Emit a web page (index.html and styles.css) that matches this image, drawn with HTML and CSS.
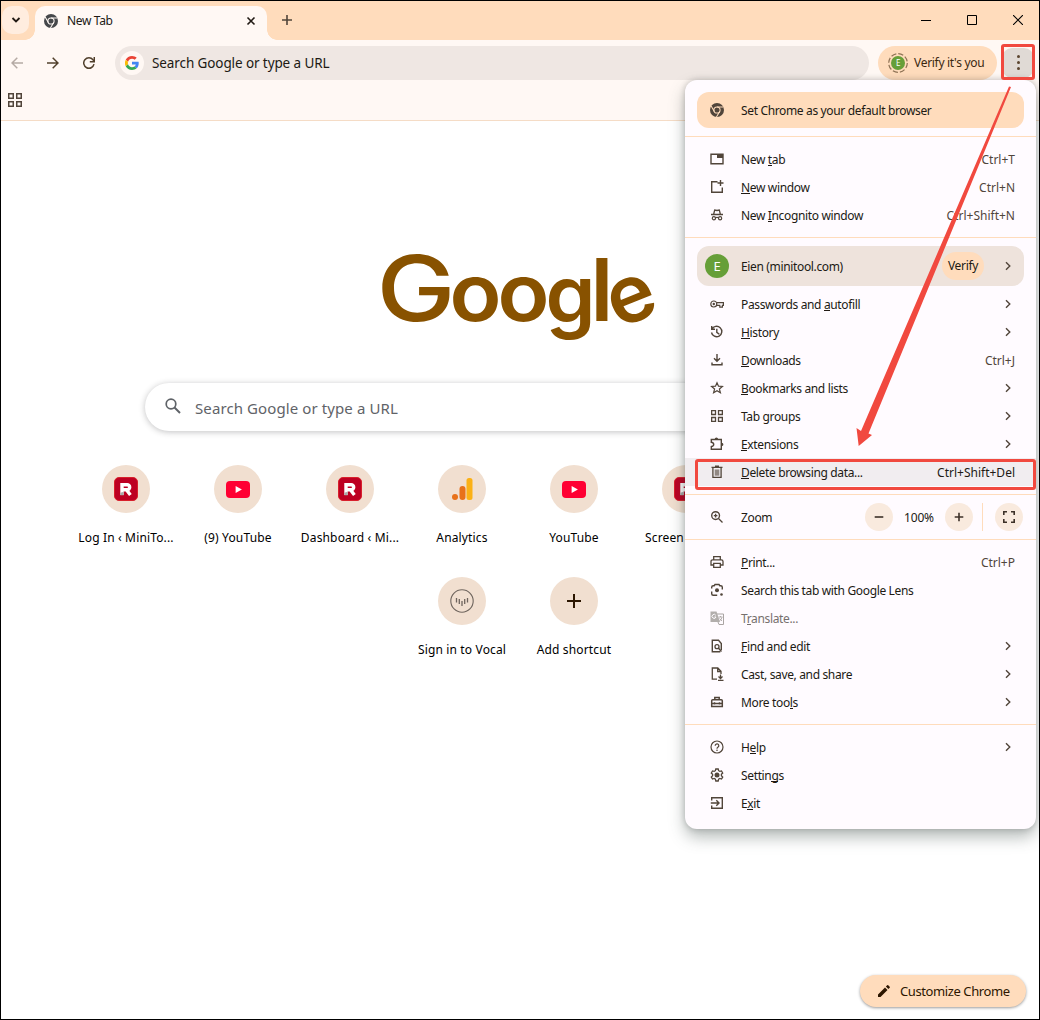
FILE: index.html
```html
<!DOCTYPE html>
<html lang="en">
<head>
  <meta charset="UTF-8">
  <title>New Tab</title>
  <meta name="viewport" content="width=device-width, initial-scale=1">
  <link rel="stylesheet" href="styles.css">
</head>
<body>
  <!-- Shared icons -->
  <svg class="sprite">
    <symbol id="chrome" viewBox="0 0 24 24">
      <circle cx="12" cy="12" r="12"/>
      <circle cx="12" cy="12" r="5.3" class="chrome-ring"/>
      <path d="M12 6.7H23M7.4 14.6L2 5.3M16.6 14.6L11 24" class="chrome-ring"/>
    </symbol>
    <symbol id="chevron" viewBox="0 0 10 10"><path d="M3 1.2L6.8 5L3 8.8" fill="none" stroke="currentColor" stroke-width="1.4"/></symbol>
    <symbol id="grid" viewBox="0 0 14 14"><path d="M.75.75h4.5v4.5H.75zM8.75.75h4.5v4.5h-4.5zM.75 8.75h4.5v4.5H.75zM8.75 8.75h4.5v4.5h-4.5z" fill="none" stroke="currentColor" stroke-width="1.5"/></symbol>
    <symbol id="youtube" viewBox="0 0 24 17"><rect width="24" height="17" rx="4" fill="#ff0033"/><path d="M9.6 4.9v7.2l6.3-3.6z" fill="#fff"/></symbol>
    <symbol id="minitool" viewBox="0 0 24 24">
      <rect x=".5" y=".5" width="23" height="23" rx="4.5" fill="#bd0022" stroke="#d8202c"/>
      <path d="M8 18V7.8h5.2a2.5 2.5 0 0 1 0 5H9.5M12.6 13l3.8 5" fill="none" stroke="#fff" stroke-width="3.4"/>
      <path d="M6.3 18.2v-2.5l3.4-1v3.5z" fill="#aaa"/>
    </symbol>
  </svg>

  <div class="window">
    <header class="tabstrip">
      <div class="tab-search"><svg width="10" height="8" viewBox="0 0 10 8"><path d="M1.5 2L5 5.5L8.5 2" fill="none" stroke="currentColor" stroke-width="1.8"/></svg></div>
      <div class="tab">
        <svg class="tab-icon" width="14" height="14"><use href="#chrome"/></svg>
        <span class="tab-title">New Tab</span>
        <svg width="10" height="10" viewBox="0 0 10 10"><path d="M1.5 1.5l7 7M8.5 1.5l-7 7" stroke="currentColor" stroke-width="1.6"/></svg>
      </div>
      <svg class="new-tab" width="12" height="12" viewBox="0 0 12 12"><path d="M6 1v10M1 6h10" stroke="currentColor" stroke-width="1.6"/></svg>
      <div class="window-controls">
        <svg width="10" height="10" viewBox="0 0 10 10"><path d="M0 5.5h10" stroke="#000"/></svg>
        <svg width="10" height="10" viewBox="0 0 10 10"><path d="M.5.5h9v9h-9z" fill="none" stroke="#000"/></svg>
        <svg width="10" height="10" viewBox="0 0 10 10"><path d="M0 0l10 10M10 0L0 10" stroke="#000" stroke-width="1.1"/></svg>
      </div>
    </header>

    <div class="toolbar">
      <svg class="nav-btn disabled" width="12" height="12" viewBox="0 0 12 12"><path d="M12 6H1.2M6.3.7L1 6l5.3 5.3" fill="none" stroke="currentColor" stroke-width="1.5"/></svg>
      <svg class="nav-btn" width="12" height="12" viewBox="0 0 12 12"><path d="M0 6h10.8M5.7.7L11 6l-5.3 5.3" fill="none" stroke="currentColor" stroke-width="1.5"/></svg>
      <svg class="nav-btn" width="12" height="12" viewBox="0 0 12 12"><path d="M11 7.2A5.2 5.2 0 1 1 10 2.8L11.2 4.4" fill="none" stroke="currentColor" stroke-width="1.5"/><path d="M11.3 0v4.8H6.8" fill="none" stroke="currentColor" stroke-width="1.5"/></svg>
      <div class="omnibox">
        <span class="g-badge">
          <svg width="14" height="14" viewBox="0 0 48 48">
            <path fill="#ea4335" d="M24 9.5c3.5 0 6.7 1.2 9.2 3.6l6.9-6.9C35.9 2.4 30.5 0 24 0 14.6 0 6.5 5.4 2.6 13.2l8 6.2C12.4 13.7 17.7 9.5 24 9.5z"/>
            <path fill="#4285f4" d="M47 24.5c0-1.6-.2-3.1-.4-4.5H24v9h12.9c-.6 3-2.3 5.5-4.8 7.200l7.700 6C44.400 38 47 32 47 24.500z"/>
            <path fill="#fbbc05" d="M10.500 28.600a14.500 14.500 0 0 1 0-9.200l-8-6.200a24 24 0 0 0 0 21.600z"/>
            <path fill="#34a853" d="M24 48c6.500 0 11.900-2.100 15.900-5.800l-7.700-6c-2.200 1.500-4.900 2.300-8.200 2.300-6.300 0-11.600-4.200-13.500-9.900l-8 6.200C6.500 42.600 14.600 48 24 48z"/>
          </svg>
        </span>
        <span class="omnibox-text">Search Google or type a URL</span>
      </div>
      <div class="verify">
        <span class="verify-avatar"><svg width="20" height="20" viewBox="0 0 20 20"><circle cx="10" cy="10" r="9.300" fill="none" stroke="#8f7355" stroke-width="1.200" stroke-dasharray="5.300 2"/></svg><b>E</b></span>
        <span>Verify it's you</span>
      </div>
      <div class="menu-btn"><i></i><i></i><i></i></div>
    </div>

    <div class="bookmarks"><svg width="14" height="14"><use href="#grid"/></svg></div>

    <main class="page">
      <svg class="logo" width="300" height="110" viewBox="370 240 300 110">
        <text y="321"><tspan x="376.500" class="logo-g" textLength="79" lengthAdjust="spacingAndGlyphs">G</tspan><tspan x="449.500" textLength="52" lengthAdjust="spacingAndGlyphs">o</tspan><tspan x="497.500" textLength="52" lengthAdjust="spacingAndGlyphs">o</tspan><tspan x="545.500" y="323">g</tspan><tspan x="590.500" y="321" class="logo-l">l</tspan><tspan x="618" y="329" rotate="-22">e</tspan></text>
      </svg>
      <div class="search">
        <svg width="16" height="16" viewBox="0 0 16 16"><circle cx="6" cy="6" r="4.800" fill="none" stroke="currentColor" stroke-width="1.700"/><path d="M9.500 9.500l5.500 5.500" stroke="currentColor" stroke-width="2"/></svg>
        <span>Search Google or type a URL</span>
      </div>
      <div class="shortcuts">
        <div class="tile"><span class="tile-icon"><svg width="24" height="24"><use href="#minitool"/></svg></span><span class="tile-label">Log In ‹ MiniTo...</span></div>
        <div class="tile"><span class="tile-icon"><svg width="24" height="17"><use href="#youtube"/></svg></span><span class="tile-label">(9) YouTube</span></div>
        <div class="tile"><span class="tile-icon"><svg width="24" height="24"><use href="#minitool"/></svg></span><span class="tile-label">Dashboard ‹ Mi...</span></div>
        <div class="tile"><span class="tile-icon"><svg width="22" height="24" viewBox="0 0 22 24"><circle cx="4" cy="20" r="3" fill="#e8711a"/><rect x="8.500" y="9" width="6" height="14" rx="3" fill="#e8711a"/><rect x="15.500" y="1" width="6" height="22" rx="2.500" fill="#fbb116"/></svg></span><span class="tile-label">Analytics</span></div>
        <div class="tile"><span class="tile-icon"><svg width="24" height="17"><use href="#youtube"/></svg></span><span class="tile-label">YouTube</span></div>
        <div class="tile"><span class="tile-icon"><svg width="24" height="24"><use href="#minitool"/></svg></span><span class="tile-label cut">Screen</span></div>
      </div>
      <div class="shortcuts second">
        <div class="tile"><span class="tile-icon"><svg width="24" height="24" viewBox="0 0 24 24"><circle cx="12" cy="12" r="11.200" fill="none" stroke="#6f655e" stroke-width="1.100"/><path d="M6.500 9v4.500M9.300 10v5M12 12v5M14.700 10v5M17.500 9v4.500" stroke="#6f655e" stroke-width="1.300"/></svg></span><span class="tile-label">Sign in to Vocal</span></div>
        <div class="tile"><span class="tile-icon"><svg width="14" height="14" viewBox="0 0 14 14"><path d="M7 0v14M0 7h14" stroke="#2c1600" stroke-width="2"/></svg></span><span class="tile-label">Add shortcut</span></div>
      </div>
    </main>

    <div class="customize">
      <svg width="12" height="12" viewBox="0 0 12 12"><path d="M0 9.500V12h2.500l7-7L7 2.500zM11.700 2.800a.8.8 0 0 0 0-1L10.200.3a.8.8 0 0 0-1 0L7.900 1.600l2.500 2.500z" fill="currentColor"/></svg>
      <span>Customize Chrome</span>
    </div>

    <!-- App menu -->
    <div class="menu">
      <div class="default-browser"><svg class="menu-icon" width="14" height="14"><use href="#chrome"/></svg><span class="label">Set Chrome as your default browser</span></div>
      <hr>
      <div class="item"><svg class="menu-icon" width="14" height="14" viewBox="0 0 14 14"><path d="M1 2.200h12v9.600H1z" fill="none" stroke="currentColor" stroke-width="1.400"/><path d="M7 2h6v4H7z"/></svg><span class="label">New <u>t</u>ab</span><span class="key">Ctrl+T</span></div>
      <div class="item"><svg class="menu-icon" width="14" height="14" viewBox="0 0 14 14"><path d="M7.500 1.700H1.700v10.600h10.600V7.500M10.500 0v6M7.500 3h6" fill="none" stroke="currentColor" stroke-width="1.400"/></svg><span class="label"><u>N</u>ew window</span><span class="key">Ctrl+N</span></div>
      <div class="item"><svg class="menu-icon" width="14" height="14" viewBox="0 0 14 14"><path d="M3.700 6l1-4 2.300.5 2.300-.5 1 4M1 6.500h12M5.200 9.800q1.800-1 3.600 0" fill="none" stroke="currentColor" stroke-width="1.300"/><circle cx="3.900" cy="10.300" r="1.600" fill="none" stroke="currentColor" stroke-width="1.200"/><circle cx="10.100" cy="10.300" r="1.600" fill="none" stroke="currentColor" stroke-width="1.200"/></svg><span class="label">New <u>I</u>ncognito window</span><span class="key">Ctrl+Shift+N</span></div>
      <hr>
      <div class="account">
        <span class="avatar">E</span>
        <span class="label">Eien (minitool.com)</span>
        <span class="verify-chip">Verify</span>
        <svg class="chevron" width="10" height="10"><use href="#chevron"/></svg>
      </div>
      <div class="item"><svg class="menu-icon" width="14" height="14" viewBox="0 0 14 14"><circle cx="3.800" cy="7" r="3" fill="none" stroke="currentColor" stroke-width="1.200"/><circle cx="3.800" cy="7" r="1.200"/><path d="M6.700 5.700h6.700v2.600h-1v1.800h-2.600V8.300H6.700" fill="none" stroke="currentColor" stroke-width="1.200"/></svg><span class="label">Passwords and <u>a</u>utofill</span><svg class="chevron" width="10" height="10"><use href="#chevron"/></svg></div>
      <div class="item"><svg class="menu-icon" width="14" height="14" viewBox="0 0 14 14"><path d="M1.700 1v3.300H5M1.900 4.300A5.200 5.200 0 1 1 1.500 7.500M6.800 3.800v3.500l2.500 2" fill="none" stroke="currentColor" stroke-width="1.400"/></svg><span class="label"><u>H</u>istory</span><svg class="chevron" width="10" height="10"><use href="#chevron"/></svg></div>
      <div class="item"><svg class="menu-icon" width="14" height="14" viewBox="0 0 14 14"><path d="M7 1v7M4 5.300l3 3 3-3M2 9.500v2.300h10V9.500" fill="none" stroke="currentColor" stroke-width="1.400"/></svg><span class="label"><u>D</u>ownloads</span><span class="key">Ctrl+J</span></div>
      <div class="item"><svg class="menu-icon" width="14" height="14" viewBox="0 0 14 14"><path d="M7 1.700l1.500 3.500 3.900.3-3 2.500 1 3.800L7 9.800l-3.400 2 1-3.800-3-2.500 3.900-.3z" fill="none" stroke="currentColor" stroke-width="1.200"/></svg><span class="label"><u>B</u>ookmarks and lists</span><svg class="chevron" width="10" height="10"><use href="#chevron"/></svg></div>
      <div class="item"><svg class="menu-icon small" width="12" height="12"><use href="#grid"/></svg><span class="label">Tab groups</span><svg class="chevron" width="10" height="10"><use href="#chevron"/></svg></div>
      <div class="item"><svg class="menu-icon" width="14" height="14" viewBox="0 0 14 14"><path d="M1.300 2.500h10v9.800h-10V9.500q2.400-.4 2.400-2.100T1.300 5.300z" fill="none" stroke="currentColor" stroke-width="1.400"/><path d="M4.700 2.200a1.700 1.700 0 0 1 3.400 0zM11.700 5.700a1.700 1.700 0 0 1 0 3.400z"/></svg><span class="label"><u>E</u>xtensions</span><svg class="chevron" width="10" height="10"><use href="#chevron"/></svg></div>
      <div class="item hover"><svg class="menu-icon" width="14" height="14" viewBox="0 0 14 14"><path d="M2.900 3v9.300h8.200V3M1.500 2.400h11M5 1.200h4" fill="none" stroke="currentColor" stroke-width="1.300"/><path d="M4.700 4.500h4.600v6.200H4.700z" opacity=".6"/></svg><span class="label"><u>D</u>elete browsing data...</span><span class="key">Ctrl+Shift+Del</span></div>
      <hr>
      <div class="zoom-row">
        <svg class="menu-icon" width="14" height="14" viewBox="0 0 14 14"><circle cx="5.600" cy="5.600" r="3.900" fill="none" stroke="currentColor" stroke-width="1.400"/><path d="M8.500 8.500l4 4M3.800 5.600h3.600M5.600 3.800v3.600" stroke="currentColor" stroke-width="1.300"/></svg>
        <span class="label">Zoom</span>
        <span class="round"><svg width="10" height="10" viewBox="0 0 10 10"><path d="M.7 5h8.600" stroke="currentColor" stroke-width="1.600"/></svg></span>
        <span class="percent">100%</span>
        <span class="round"><svg width="10" height="10" viewBox="0 0 10 10"><path d="M.7 5h8.600M5 .7v8.600" stroke="currentColor" stroke-width="1.600"/></svg></span>
        <span class="divider"></span>
        <span class="round"><svg width="12" height="12" viewBox="0 0 12 12"><path d="M.8 4V.8H4M8 .8h3.200V4M11.200 8v3.200H8M4 11.200H.8V8" fill="none" stroke="currentColor" stroke-width="1.600"/></svg></span>
      </div>
      <hr>
      <div class="item"><svg class="menu-icon" width="14" height="14" viewBox="0 0 14 14"><path d="M3.700 4.500V1.700h6.600v2.800M3.500 10H1V6.500q0-1.700 1.700-1.700h8.600Q13 4.800 13 6.500V10h-2.500M3.700 8.400h6.600v4H3.700z" fill="none" stroke="currentColor" stroke-width="1.300"/></svg><span class="label"><u>P</u>rint...</span><span class="key">Ctrl+P</span></div>
      <div class="item"><svg class="menu-icon" width="14" height="14" viewBox="0 0 14 14"><path d="M1.700 5.500V4.200q0-1.500 1.500-1.500h1L5 1.500h4l.8 1.200h1q1.500 0 1.500 1.500v2.300M1.700 8.500v2.300q0 1.500 1.500 1.500h4" fill="none" stroke="currentColor" stroke-width="1.400"/><circle cx="7" cy="7.300" r="2"/><circle cx="11.500" cy="11.500" r="1.300"/></svg><span class="label">Search this tab with Google Lens</span></div>
      <div class="item off"><svg class="menu-icon" width="14" height="14" viewBox="0 0 14 14"><path d="M.5.500h6L10 11H.5z" opacity=".9"/><path d="M7 3h6.500v10.500H9L8 11" fill="none" stroke="currentColor"/><path d="M8.500 6h4M10.500 5v1M12 6.300q-.5 2-2.300 3.500M9.500 7.500l2.500 2.500" fill="none" stroke="currentColor" stroke-width=".9"/><path d="M5.800 4.300A2 2 0 1 0 6 6H4.500" fill="none" stroke="#fffbff"/></svg><span class="label">T<u>r</u>anslate...</span></div>
      <div class="item"><svg class="menu-icon" width="14" height="14" viewBox="0 0 14 14"><path d="M11.300 11V4.500L8.500 1.300H2.300v11.400h8" fill="none" stroke="currentColor" stroke-width="1.400"/><circle cx="7" cy="7.700" r="2" fill="none" stroke="currentColor" stroke-width="1.300"/><path d="M8.300 9l3.200 3.400" stroke="currentColor" stroke-width="1.400"/></svg><span class="label"><u>F</u>ind and edit</span><svg class="chevron" width="10" height="10"><use href="#chevron"/></svg></div>
      <div class="item"><svg class="menu-icon" width="14" height="14" viewBox="0 0 14 14"><path d="M7 12.200H2.300V1h5.500l3.200 3.300V7M7.700 1v3.500H11M10.500 7.500v4M8.500 9.500l2 2 2-2M8 13.400h5.500" fill="none" stroke="currentColor" stroke-width="1.300"/></svg><span class="label">Cast, save, and share</span><svg class="chevron" width="10" height="10"><use href="#chevron"/></svg></div>
      <div class="item"><svg class="menu-icon" width="14" height="14" viewBox="0 0 14 14"><path d="M1.700 11.500V5.700q0-1 1-1h8.600q1 0 1 1v5.800zM4.800 4.500V2.600h4.400v1.900M1.500 8.400h11M4.500 7.200v2.400M9.500 7.200v2.400" fill="none" stroke="currentColor" stroke-width="1.500"/></svg><span class="label">More too<u>l</u>s</span><svg class="chevron" width="10" height="10"><use href="#chevron"/></svg></div>
      <hr>
      <div class="item"><svg class="menu-icon" width="14" height="14" viewBox="0 0 14 14"><circle cx="7" cy="7" r="6" fill="none" stroke="currentColor" stroke-width="1.200"/><path d="M5.200 5.700a1.800 1.800 0 1 1 2.900 1.400Q7 7.800 7 8.700" fill="none" stroke="currentColor" stroke-width="1.200"/><circle cx="7" cy="10.300" r=".8"/></svg><span class="label">H<u>e</u>lp</span><svg class="chevron" width="10" height="10"><use href="#chevron"/></svg></div>
      <div class="item"><svg class="menu-icon" width="14" height="14" viewBox="0 0 14 14"><path d="M5.800 1h2.400l.4 1.700 1.200.7 1.700-.5 1.200 2.100-1.300 1.200v1.500l1.300 1.300-1.200 2-1.700-.5-1.200.7L8.200 13H5.800l-.4-1.800-1.200-.7-1.700.5-1.200-2 1.300-1.300V6.200L1.300 5l1.200-2.100 1.700.5 1.200-.7z" fill="none" stroke="currentColor" stroke-width="1.300"/><circle cx="7" cy="7" r="2.500"/></svg><span class="label">Settin<u>g</u>s</span></div>
      <div class="item"><svg class="menu-icon" width="14" height="14" viewBox="0 0 14 14"><path d="M1.700 4.500V1.700h10.600v10.600H1.700V9.500M.8 7h8M6.300 4.300L9 7 6.300 9.700" fill="none" stroke="currentColor" stroke-width="1.400"/></svg><span class="label">E<u>x</u>it</span></div>
    </div>

    <!-- Callouts -->
    <svg class="callouts" width="1040" height="1020" viewBox="0 0 1040 1020">
      <rect x="1002.500" y="45.500" width="31" height="33" rx="1.500"/>
      <rect x="696.500" y="460.500" width="338" height="28" rx="1.500"/>
      <path d="M1009 86.500L1011 87L868.500 433.500L872 435L858.700 446L856.500 428L861 431z" class="arrow"/>
    </svg>
  </div>
</body>
</html>
```
FILE: styles.css
```css
:root { --peach: #ffdcbc; --toolbar: #fff8f4; --ink: #211a14; --icon: #51453a; --red: #f1493f; }
* { box-sizing: border-box; margin: 0; padding: 0; }
body { font-family: 'Noto Sans', sans-serif; font-size: 12px; color: var(--ink); background: #fff; overflow: hidden; }
svg { display: block; flex: none; }
.sprite { position: absolute; width: 0; height: 0; }
.chrome-ring { fill: none; stroke: var(--ring, #fff8f4); stroke-width: 1.8; }

.window { position: relative; width: 1040px; height: 1020px; border: 1px solid #000; overflow: hidden; display: flex; flex-direction: column; }

/* Tab strip */
.tabstrip { display: flex; height: 39px; padding: 5px 15px 0 1px; background: var(--peach); flex: none; }
.tab-search { display: flex; align-items: center; justify-content: center; width: 27px; height: 28px; border-radius: 10px; background: #ffeddf; }
.tab { position: relative; display: flex; align-items: center; width: 232px; height: 34px; margin-left: 6px; padding: 0 11px 5px 9px; background: var(--toolbar); border-radius: 10px 10px 0 0; }
.tab::before, .tab::after { content: ""; position: absolute; bottom: 0; width: 10px; height: 10px; }
.tab::before { left: -10px; background: radial-gradient(circle at 0 0, transparent 9.5px, var(--toolbar) 10px); }
.tab::after { right: -10px; background: radial-gradient(circle at 100% 0, transparent 9.5px, var(--toolbar) 10px); }
.tab-icon { color: #45474a; fill: #45474a; }
.tab-title { flex: 1; margin-left: 9px; letter-spacing: -.35px; }
.new-tab { margin: 8px 0 0 14px; color: #51453a; }
.window-controls { display: flex; gap: 36px; margin: 9px 1px 0 auto; }

/* Toolbar */
.toolbar { display: flex; align-items: center; height: 45px; padding: 0 4px 0 10px; background: var(--toolbar); flex: none; }
.nav-btn { margin-right: 24px; color: #51402c; }
.nav-btn.disabled { color: #b5aaa4; }
.omnibox { display: flex; align-items: center; width: 754px; height: 34px; margin-left: -4px; padding-left: 5px; border-radius: 17px; background: #efe7e3; }
.g-badge { display: flex; align-items: center; justify-content: center; width: 24px; height: 24px; border-radius: 50%; background: var(--toolbar); }
.omnibox-text { margin-left: 8px; font-size: 13.5px; letter-spacing: -.1px; }
.verify { display: flex; align-items: center; width: 119px; height: 34px; margin-left: 9px; padding-left: 10px; border-radius: 17px; background: var(--peach); color: #3b2810; letter-spacing: -.3px; white-space: nowrap; }
.verify-avatar { display: grid; place-items: center; width: 20px; height: 20px; margin-right: 6px; }
.verify-avatar > * { grid-area: 1 / 1; }
.verify-avatar b { width: 14px; height: 14px; border-radius: 50%; background: #669f38; color: #fff; font-size: 8px; font-weight: 400; line-height: 14px; text-align: center; }
.menu-btn { display: flex; flex-direction: column; align-items: center; justify-content: center; gap: 3px; width: 32px; height: 30px; margin-left: 5px; border-radius: 10px; background: #e0dad5; }
.menu-btn i { width: 3px; height: 3px; border-radius: 50%; background: #5c4630; }
.bookmarks { height: 36px; padding: 8px 7px; background: var(--toolbar); border-bottom: 1px solid #f5dcc6; color: #51453a; flex: none; }

/* New tab page */
.page { flex: 1; }
.logo { margin: 119px 0 0 369px; overflow: visible; }
.logo text { font-family: Inter, sans-serif; font-size: 80px; font-weight: 600; fill: #885200; }
.logo .logo-g { font-size: 91px; font-weight: 500; }
.logo .logo-l { font-size: 87px; }
.search { display: flex; align-items: center; width: 746px; height: 48px; margin: 33px 0 0 144px; padding-left: 20px; border-radius: 24px; background: #fff; box-shadow: 0 1px 6px rgba(32,33,36,.28); color: #5f6368; font-size: 15px; letter-spacing: .1px; }
.search svg { margin: -2px 14px 0 0; }
.search span { padding-top: 1px; }
.shortcuts { display: flex; margin: 34px 0 0 69px; }
.shortcuts.second { margin: 30px 0 0 405px; }
.tile { display: flex; flex-direction: column; align-items: center; width: 112px; color: #000; }
.tile-icon { display: flex; align-items: center; justify-content: center; width: 48px; height: 48px; border-radius: 50%; background: #f1dfd0; }
.tile-label { margin-top: 16px; height: 18px; line-height: 18px; letter-spacing: .15px; white-space: nowrap; }
.tile-label.cut { width: 82px; }
.customize { position: absolute; right: 13px; bottom: 12px; display: flex; align-items: center; gap: 10px; width: 166px; height: 32px; padding-left: 18px; border-radius: 16px; background: var(--peach); color: #2c1600; font-size: 13px; letter-spacing: -.4px; box-shadow: 0 1px 3px rgba(0,0,0,.4); white-space: nowrap; }

/* App menu */
.menu { position: absolute; left: 684px; top: 79px; width: 351px; height: 749px; padding: 12px 0; border-radius: 12px; background: #fffbff; box-shadow: 0 8px 16px rgba(60,75,70,.38), 0 0 6px rgba(0,0,0,.2); --ring: #ffdcbc; }
.menu hr { height: 1px; margin: 8px 0; border: 0; background: #ffdcbc; }
.menu-icon { margin-right: 17px; color: var(--icon); fill: var(--icon); }
.menu-icon.small { margin: 0 18px 0 1px; }
.default-browser { display: flex; align-items: center; height: 36px; margin: 0 12px; padding-left: 13px; border-radius: 12px; background: var(--peach); }
.item { display: flex; align-items: center; height: 28px; padding: 0 21px 0 25px; }
.item.hover { background: #f1edf0; }
.item.off { color: #76706e; }
.item.off .menu-icon { color: #aaa5a3; fill: #aaa5a3; }
.label { flex: 1; padding-top: 1px; letter-spacing: -.35px; }
.label u { text-decoration: none; box-shadow: inset 0 -2px #fffbff, inset 0 -3px currentColor; }
.item.hover u { box-shadow: inset 0 -2px #f1edf0, inset 0 -3px currentColor; }
.key { padding-top: 1px; color: #50453b; }
.hover .key { color: var(--ink); }
.chevron { margin-right: 2px; color: var(--icon); }
.account { display: flex; align-items: center; height: 40px; margin: 0 12px 4px; padding: 0 9px 0 8px; border-radius: 12px; background: #eee3dc; }
.avatar { width: 24px; height: 24px; margin-right: 12px; border-radius: 50%; background: #669f38; color: #fff; font-size: 13px; line-height: 24px; text-align: center; }
.verify-chip { width: 42px; height: 28px; margin-right: 19px; border-radius: 14px; background: var(--peach); letter-spacing: -.3px; line-height: 28px; text-align: center; }
.zoom-row { display: flex; align-items: center; height: 44px; margin: -8px 0; padding: 0 13px 0 25px; }
.round { display: flex; align-items: center; justify-content: center; width: 28px; height: 28px; border-radius: 50%; background: #f9eade; color: #3d3128; }
.percent { width: 52px; letter-spacing: -.2px; text-align: center; }
.divider { width: 1px; height: 28px; margin: 0 12px 0 9px; background: #ffdcbc; }

.callouts { position: absolute; left: -1px; top: -1px; fill: none; stroke: var(--red); stroke-width: 3; }
.callouts .arrow { fill: var(--red); stroke: none; }
```
